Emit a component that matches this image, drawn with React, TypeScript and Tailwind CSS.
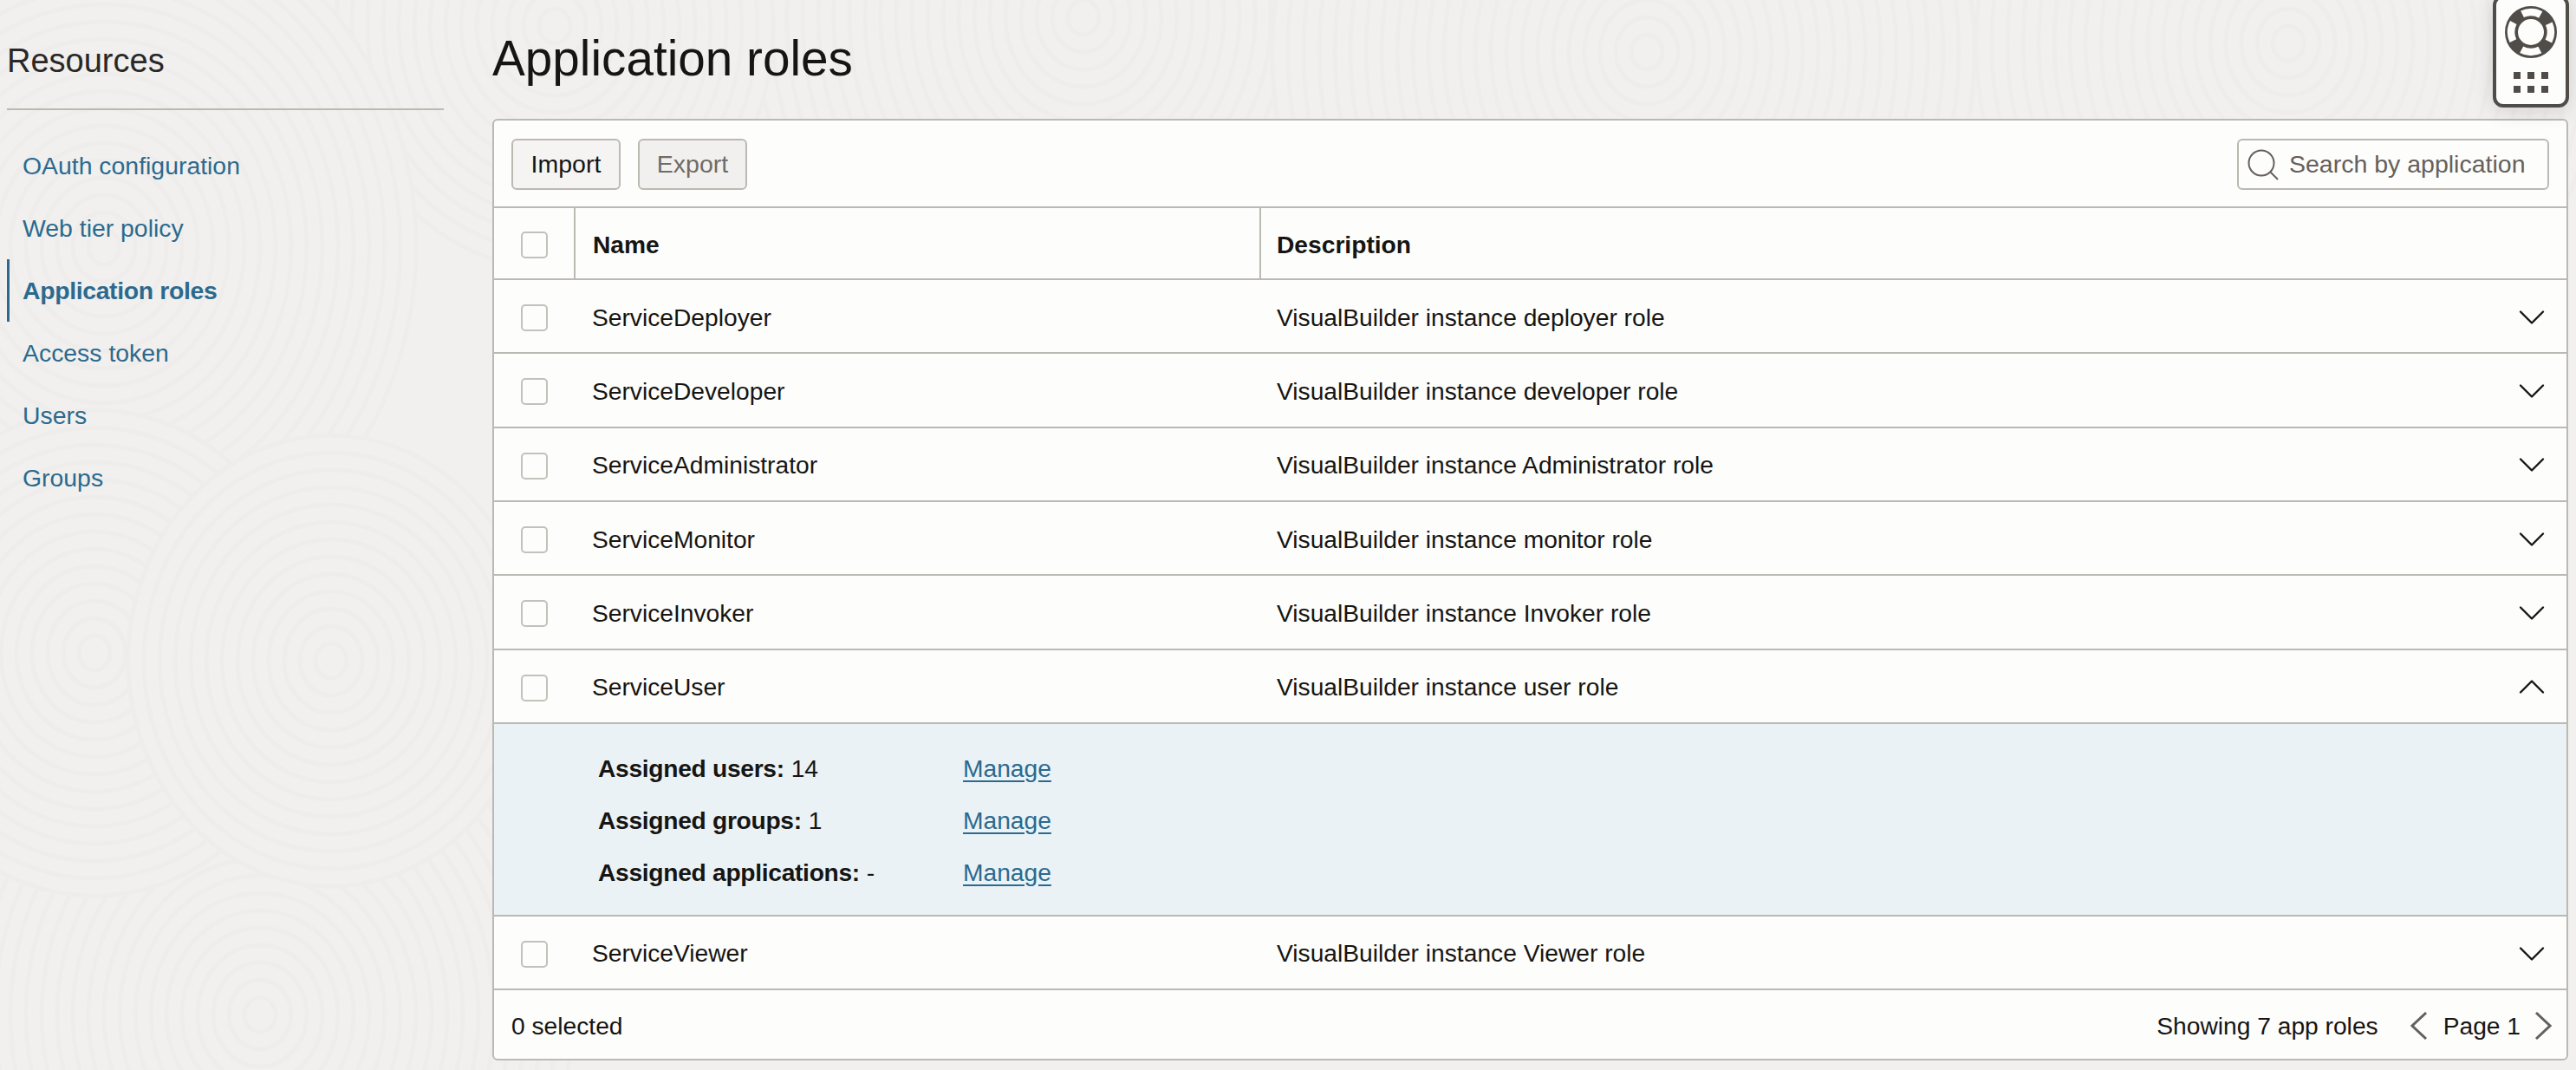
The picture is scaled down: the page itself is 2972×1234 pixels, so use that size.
import { ChevronDown, ChevronUp } from "lucide-react";

const navItems = ["OAuth configuration", "Web tier policy", "Application roles", "Access token", "Users", "Groups"];

const roles = [
  { name: "ServiceDeployer", description: "VisualBuilder instance deployer role" },
  { name: "ServiceDeveloper", description: "VisualBuilder instance developer role" },
  { name: "ServiceAdministrator", description: "VisualBuilder instance Administrator role" },
  { name: "ServiceMonitor", description: "VisualBuilder instance monitor role" },
  { name: "ServiceInvoker", description: "VisualBuilder instance Invoker role" },
  { name: "ServiceUser", description: "VisualBuilder instance user role", expanded: true },
  { name: "ServiceViewer", description: "VisualBuilder instance Viewer role" },
];

const assigned = [
  { label: "Assigned users:", value: "14" },
  { label: "Assigned groups:", value: "1" },
  { label: "Assigned applications:", value: "-" },
];

// background texture: rings painted outermost first, so later clusters cut off earlier ones
const swirls = [
  { x: 1250, y: 20, n: 22 },
  { x: 1900, y: 60, n: 24 },
  { x: 2640, y: 50, n: 20 },
  { x: 640, y: 30, n: 14 },
  { x: 300, y: 1170, n: 20 },
  { x: 120, y: 285, n: 20 },
  { x: 109, y: 753, n: 14 },
  { x: 382, y: 762, n: 13 },
];

function Swirls() {
  return (
    <svg className="absolute inset-0 h-full w-full" viewBox="0 0 2972 1234" fill="#f1f0ee" stroke="#eeedeb" strokeWidth="5">
      {swirls.map((c) =>
        Array.from({ length: c.n }, (_, i) => c.n - i).map((i) => (
          <ellipse key={`${c.x}-${i}`} cx={c.x} cy={c.y} rx={i * 18} ry={i * 20} />
        )),
      )}
    </svg>
  );
}

function Checkbox() {
  return <span className="mt-[4px] block size-[31px] rounded-[5px] border-2 border-[#c4c1bb] bg-[#fdfdfb]" />;
}

function HelpWidget() {
  return (
    <div className="absolute top-[-6px] right-[8px] flex h-[130px] w-[88px] flex-col items-center rounded-[12px] border-[4px] border-[#504c48] bg-[#fdfdfb] shadow-[0_4px_24px_rgba(0,0,0,0.12)]">
      <svg className="mt-[9px]" width="60" height="60" viewBox="0 0 60 60" fill="none">
        <circle cx="30" cy="30" r="22.5" stroke="#504c48" strokeWidth="15" />
        <circle cx="30" cy="30" r="23" stroke="#fdfdfb" strokeWidth="8.5" strokeDasharray="22 14.13" strokeDashoffset="11" />
      </svg>
      <div className="mt-[16px] grid grid-cols-3 gap-[8px]">
        {[0, 1, 2, 3, 4, 5].map((i) => (
          <span className="block size-[8px] bg-[#504c48]" key={i} />
        ))}
      </div>
    </div>
  );
}

function RoleRow({ name, description, expanded }: { name: string; description: string; expanded?: boolean }) {
  return (
    <div className="flex h-[85.33px] items-center border-b-2 border-[#bcb9b3]">
      <div className="flex w-[92px] shrink-0 justify-center">
        <Checkbox />
      </div>
      <div className="w-[811px] shrink-0 pl-[21px] pt-[2px]">{name}</div>
      <div className="flex-1 pt-[2px]">{description}</div>
      <div className="pr-[14px] pt-[2px]">
        {expanded ? (
          <ChevronUp className="size-[52px]" strokeWidth={1.1} />
        ) : (
          <ChevronDown className="size-[52px]" strokeWidth={1.1} />
        )}
      </div>
    </div>
  );
}

export default function App() {
  return (
    <div className="relative h-[1234px] w-[2972px] overflow-hidden bg-[#f1f0ee] font-['Liberation_Sans',sans-serif] text-[28.2px] text-[#161513]">
      <Swirls />
      <div className="relative flex">
        <aside className="w-[512px] shrink-0 pl-[8px]">
          <h2 className="flex h-[127px] items-center border-b-2 border-[#bcb9b3] pt-[15px] text-[38px] text-[#2a2826]">Resources</h2>
          <nav className="mt-[28px] flex flex-col">
            {navItems.map((item) => (
              <a
                className={
                  item === "Application roles"
                    ? "flex h-[72px] items-center border-l-[3px] border-[#2b6a8e] pl-[15px] text-[28.4px] font-bold tracking-[-0.35px] text-[#2b6a8e]"
                    : "flex h-[72px] items-center pl-[18px] text-[28.4px] text-[#2b6a8e]"
                }
                key={item}
              >
                {item}
              </a>
            ))}
          </nav>
        </aside>
        <main className="ml-[56px] w-[2395px] shrink-0">
          <h1 className="flex h-[137px] items-start pt-[34px] text-[56.7px] leading-[68px]">Application roles</h1>
          <section className="h-[1086px] rounded-[6px] border-2 border-[#bcb9b3] bg-[#fdfdfb]">
            <div className="flex h-[101px] items-start border-b-2 border-[#bcb9b3] px-[20px] pt-[21px]">
              <button className="h-[59px] w-[126px] rounded-[6px] border-2 border-[#bcb9b3] bg-[#f5f4f2] text-[28.5px]">Import</button>
              <button className="ml-[20px] h-[59px] w-[126px] rounded-[6px] border-2 border-[#bcb9b3] bg-[#f1f0ee] text-[28.5px] text-[#6f6b66]">Export</button>
              <div className="ml-auto flex h-[59px] w-[360px] items-center rounded-[6px] border-2 border-[#bcb9b3] pl-[10px] text-[28.5px] text-[#65605b]">
                <svg width="36" height="36" viewBox="0 0 36 36" fill="none" stroke="#65605b" strokeWidth="2">
                  <circle cx="16" cy="16" r="14.5" />
                  <path d="M26 26l9 9" />
                </svg>
                <span className="ml-[12px] whitespace-nowrap">Search by application</span>
              </div>
            </div>
            <div className="flex h-[83px] items-stretch border-b-2 border-[#bcb9b3] font-bold">
              <div className="flex w-[92px] shrink-0 items-center justify-center">
                <Checkbox />
              </div>
              <div className="flex w-[791px] shrink-0 items-center border-l-2 border-[#bcb9b3] pl-[20px] pt-[4px]">Name</div>
              <div className="flex flex-1 items-center border-l-2 border-[#bcb9b3] pl-[18px] pt-[4px]">Description</div>
            </div>
            {roles.map((role) => (
              <div key={role.name}>
                <RoleRow name={role.name} description={role.description} expanded={role.expanded} />
                {role.expanded && (
                  <div className="flex h-[222px] flex-col justify-center gap-[16px] border-b-2 border-[#bcb9b3] bg-[#eaf2f6] pl-[120px] pt-[2px]">
                    {assigned.map((row) => (
                      <div className="flex h-[44px] items-center" key={row.label}>
                        <div className="w-[421px] shrink-0">
                          <b className="tracking-[-0.3px]">{row.label}</b> {row.value}
                        </div>
                        <a className="text-[#2b6a8e] underline underline-offset-[4px]">Manage</a>
                      </div>
                    ))}
                  </div>
                )}
              </div>
            ))}
            <div className="flex h-[79px] items-center pl-[20px] pr-[17px] pt-[2px]">
              <span>0 selected</span>
              <span className="ml-auto">Showing 7 app roles</span>
              <svg className="ml-[37px]" width="20" height="32" viewBox="0 0 20 32" fill="none" stroke="#65605b" strokeWidth="3">
                <path d="M18 1L2 16l16 15" />
              </svg>
              <span className="ml-[18px] mr-[16px]">Page 1</span>
              <svg width="20" height="32" viewBox="0 0 20 32" fill="none" stroke="#65605b" strokeWidth="3">
                <path d="M2 1l16 15L2 31" />
              </svg>
            </div>
          </section>
        </main>
      </div>
      <HelpWidget />
    </div>
  );
}
